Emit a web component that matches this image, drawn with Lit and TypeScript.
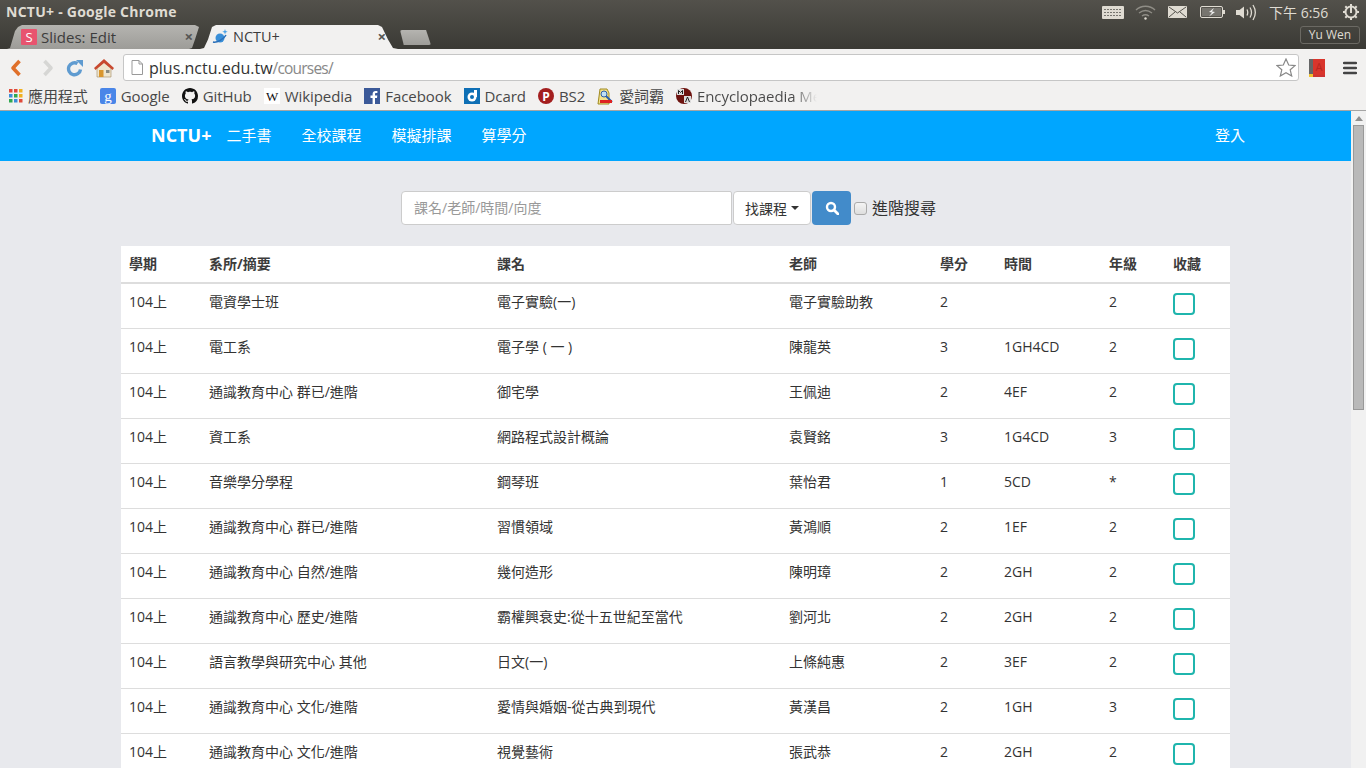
import { LitElement, html, css, svg } from "lit";
import { customElement } from "lit/decorators.js";

const rows = [
  ["104上", "電資學士班", "電子實驗(一)", "電子實驗助教", "2", "", "2"],
  ["104上", "電工系", "電子學 ( 一 )", "陳龍英", "3", "1GH4CD", "2"],
  ["104上", "通識教育中心 群已/進階", "御宅學", "王佩迪", "2", "4EF", "2"],
  ["104上", "資工系", "網路程式設計概論", "袁賢銘", "3", "1G4CD", "3"],
  ["104上", "音樂學分學程", "鋼琴班", "葉怡君", "1", "5CD", "*"],
  ["104上", "通識教育中心 群已/進階", "習慣領域", "黃鴻順", "2", "1EF", "2"],
  ["104上", "通識教育中心 自然/進階", "幾何造形", "陳明璋", "2", "2GH", "2"],
  ["104上", "通識教育中心 歷史/進階", "霸權興衰史:從十五世紀至當代", "劉河北", "2", "2GH", "2"],
  ["104上", "語言教學與研究中心 其他", "日文(一)", "上條純惠", "2", "3EF", "2"],
  ["104上", "通識教育中心 文化/進階", "愛情與婚姻-從古典到現代", "黃漢昌", "2", "1GH", "3"],
  ["104上", "通識教育中心 文化/進階", "視覺藝術", "張武恭", "2", "2GH", "2"],
];
const heads = ["學期", "系所/摘要", "課名", "老師", "學分", "時間", "年級", "收藏"];
const grid = [
  ["#e04a3a", "#e04a3a", "#f0b020"],
  ["#3c8dd8", "#2fa84f", "#f0b020"],
  ["#2fa84f", "#3c8dd8", "#e04a3a"],
];

@customElement("app-root")
export class AppRoot extends LitElement {
  static styles = css`
    :host { display: block; width: 1366px; height: 768px; overflow: hidden; font-family: "Open Sans", "Noto Sans CJK TC", sans-serif; color: #333; }
    .top { background: linear-gradient(#53514b, #3b3a35 48px); height: 49px; display: flex; flex-direction: column; }
    .titlebar { height: 24px; display: flex; align-items: center; padding-left: 6px; color: #dfdbd2; font-size: 14px; font-weight: 700; }
    .title { flex: 1; letter-spacing: .25px; margin-bottom: 2px; }
    .tray { display: flex; align-items: center; height: 24px; color: #dfdbd2; font-size: 14px; font-weight: 400; padding-right: 7px; }
    .tray svg { display: block; flex: none; }
    .t-wifi { margin-left: 11px; }
    .t-mail { margin-left: 12px; }
    .t-bat { margin-left: 13px; }
    .t-vol { margin-left: 11px; }
    .clock { margin: 0 14px 0 13px; width: 60px; white-space: nowrap; }
    .tabs { height: 25px; display: flex; align-items: flex-end; padding-left: 7px; }
    .tab { height: 24px; display: flex; align-items: center; color: #3c3c3c; flex: none; box-sizing: border-box; padding-bottom: 1px; }
    .tab1 { width: 196px; padding-left: 14px; padding-right: 10px; font-size: 15px; background: linear-gradient(#b5b4b0, #9d9c98); clip-path: polygon(0 100%, 3px 96%, 8px 25%, 11px 8%, 15px 0, calc(100% - 8px) 0, calc(100% - 4px) 8%, calc(100% - 8px) 60%, calc(100% - 11px) 96%, calc(100% - 14px) 100%); }
    .tab2 { width: 198px; margin-left: -3px; padding-left: 12px; padding-right: 12px; font-size: 14.5px; background: #f2f1f0; clip-path: polygon(0 100%, 4px 96%, 8px 60%, 12px 8%, 16px 0, calc(100% - 20px) 0, calc(100% - 16px) 8%, calc(100% - 10px) 60%, calc(100% - 5px) 96%, 100% 100%); }
    .tab svg { flex: none; margin-right: 4px; }
    .tab span { flex: 1; }
    .x { color: #555; font-size: 15px; font-weight: 700; line-height: 1; flex: none; }
    .newtab { width: 31px; height: 15px; margin: 0 0 4px 2px; background: linear-gradient(#b5b4b0, #9d9c98); clip-path: polygon(0 0, 84% 0, 100% 100%, 12% 100%); flex: none; border-radius: 2px; }
    .user { margin-left: auto; align-self: flex-start; margin-top: 2px; margin-right: 6px; height: 18px; width: 60px; box-sizing: border-box; border: 1px solid #6b6963; border-radius: 3px; color: #dfdbd2; font-size: 12px; text-align: center; line-height: 16px; }
    .toolbar { height: 35px; background: #f2f1f0; display: flex; align-items: center; box-sizing: border-box; padding: 2px 6px 0 8px; }
    .toolbar svg { display: block; flex: none; }
    .nav { display: flex; align-items: center; width: 115px; flex: none; }
    .n-back { margin-left: 2px; }
    .n-fwd { margin-left: 20px; }
    .n-rel { margin-left: 12px; }
    .n-home { margin-left: 10px; }
    .omni { width: 1176px; flex: none; height: 27px; box-sizing: border-box; background: #fff; border: 1px solid #c6c6c6; border-radius: 3px; display: flex; align-items: center; padding: 0 2px 0 7px; font-size: 16px; }
    .host { color: #333; margin-left: 6px; }
    .path { color: #888; flex: 1; font-size: 15.5px; letter-spacing: -.8px; }
    .ext { display: flex; gap: 18px; margin-left: 10px; align-items: center; }
    .bookmarks { height: 26px; background: #f2f1f0; border-bottom: 1px solid #a5a5a5; box-sizing: content-box; display: flex; align-items: center; padding: 0 0 0 8px; font-size: 15px; line-height: 22px; letter-spacing: -.07px; color: #484848; overflow: hidden; white-space: nowrap; }
    .bm { display: flex; align-items: center; gap: 5px; margin: 0 12px 2px 0; flex: none; }
    .bm svg { flex: none; display: block; }
    .fade { display: block; width: 120px; overflow: hidden; background: linear-gradient(90deg, #484848 80%, #f2f1f0 100%); -webkit-background-clip: text; background-clip: text; color: transparent; }
    .view { display: flex; height: 657px; }
    .page { flex: 1; min-width: 0; background: #e8e9ed; overflow: hidden; }
    .scroll { width: 15px; flex: none; background: #f1f1f1; display: flex; flex-direction: column; box-sizing: border-box; padding: 0 2px; }
    .arrow { height: 14px; display: flex; align-items: center; justify-content: center; }
    .arrow i { border: 4px solid transparent; border-bottom: 5px solid #8f8f8f; border-top: 0; }
    .thumb { height: 285px; box-sizing: border-box; background: #b9b9b9; border: 1px solid #999; }
    .navbar { height: 50px; box-sizing: border-box; padding: 0 0 3px 151px; background: #00a6ff; color: #fff; display: flex; align-items: center; font-size: 15px; }
    .brand { font-size: 18px; font-weight: 700; margin-right: 15px; }
    .link { margin-right: 30px; }
    .login { margin-left: auto; margin-right: 106px; }
    .search { display: flex; align-items: center; margin: 30px 0 0 401px; height: 34px; }
    .input { width: 331px; height: 34px; box-sizing: border-box; border: 1px solid #ccc; border-radius: 4px 2px 2px 4px; background: #fff; color: #999; font-size: 14px; padding-left: 12px; line-height: 32px; }
    .drop { width: 78px; height: 34px; margin-left: 1px; box-sizing: border-box; border: 1px solid #ccc; border-radius: 4px; background: #fff; color: #333; font-size: 14px; padding-bottom: 1px; display: flex; align-items: center; justify-content: center; gap: 4px; }
    .caret { border: 4px solid transparent; border-top-color: #333; border-bottom: 0; }
    .go { width: 39px; height: 34px; margin-left: 1px; background: #428bca; border-radius: 4px; display: flex; align-items: center; justify-content: center; }
    .chk { width: 13px; height: 13px; box-sizing: border-box; border: 1px solid #aaa; border-radius: 3px; background: linear-gradient(#f4f4f4, #dedede); margin: 0 5px 0 3px; }
    .adv { font-size: 16px; color: #333; margin-bottom: 2px; }
    table { border-collapse: collapse; table-layout: fixed; width: 1109px; margin: 21px 0 0 121px; background: #fff; font-size: 14px; line-height: 20px; }
    th { text-align: left; height: 37px; padding: 8px; box-sizing: border-box; border-bottom: 2px solid #ddd; font-weight: 700; vertical-align: middle; color: #3c3c3c; }
    td { padding: 8px; height: 45px; box-sizing: border-box; border-bottom: 1px solid #ddd; vertical-align: top; }
    .fav { display: block; width: 22px; height: 22px; box-sizing: border-box; border: 2px solid #1fb5ad; border-radius: 4px; background: #fff; margin-top: 1px; }
  `;

  render() {
    const widths = [80, 288, 292, 151, 64, 105, 64, 65];
    return html`
      <div class="top">
        <div class="titlebar">
          <div class="title">NCTU+ - Google Chrome</div>
          <div class="tray">
            <svg width="22" height="13" viewBox="0 0 22 13"><rect width="22" height="13" rx="1" fill="#dfdbd2"/><path d="M2 3.500h18M2 6.500h18M2 9.500h18" stroke="#77756f" stroke-dasharray="2 1"/></svg>
            <svg class="t-wifi" width="21" height="15" viewBox="0 0 21 15" fill="none" stroke="#8f8d86" stroke-width="1.400"><path d="M1 5c5-5 14-5 19 0M4 8c4-3 9-3 13 0M7 11c2-1.500 5-1.500 7 0"/><circle cx="10.500" cy="13.500" r="1.200" fill="#dfdbd2" stroke="none"/></svg>
            <svg class="t-mail" width="19" height="12" viewBox="0 0 19 12"><rect width="19" height="12" rx="1" fill="#dfdbd2"/><path d="M1 1l8.500 6L18 1M1 11l6-5M18 11l-6-5" stroke="#55534d" fill="none"/></svg>
            <svg class="t-bat" width="25" height="12" viewBox="0 0 25 12"><rect x=".5" y=".5" width="22" height="11" rx="1.500" fill="#55534d" stroke="#dfdbd2"/><rect x="23" y="4" width="2" height="4" fill="#dfdbd2"/><rect x="2" y="2" width="19" height="8" fill="#77756f"/><path d="M14 2l-5 4 3 .5-3 4 6-4.500-3-.5z" fill="#eee"/></svg>
            <svg class="t-vol" width="20" height="17" viewBox="0 0 20 17" fill="none" stroke="#dfdbd2" stroke-width="1.300"><path d="M0 6h3.500L8 2.500v12L3.500 11H0z" fill="#dfdbd2" stroke="none"/><path d="M11 5.500c1 2 1 4 0 6M14 3.500c1.800 3 1.800 7 0 10M17 1c2.800 4.500 2.800 10.500 0 15"/></svg>
            <span class="clock">下午 6:56</span>
            <svg width="16" height="16" viewBox="0 0 16 16"><circle cx="8" cy="8" r="5.500" fill="none" stroke="#dfdbd2" stroke-width="2"/><path d="M8 0v3M8 13v3M0 8h3M13 8h3M2.300 2.300l2 2M11.700 11.700l2 2M13.700 2.300l-2 2M4.300 11.700l-2 2" stroke="#dfdbd2" stroke-width="2"/><path d="M8 3v6" stroke="#dfdbd2" stroke-width="2"/></svg>
          </div>
        </div>
        <div class="tabs">
          <div class="tab tab1">
            <svg width="16" height="16" viewBox="0 0 16 16"><rect width="16" height="16" rx="1" fill="#e8546f"/><text x="8" y="13" font-size="13" text-anchor="middle" fill="#fff" font-family="Open Sans">S</text></svg>
            <span>Slides: Edit</span><b class="x">×</b>
          </div>
          <div class="tab tab2">
            <svg width="17" height="16" viewBox="0 0 17 16"><circle cx="8" cy="9" r="4.500" fill="#3a8fd8"/><path d="M1 13c4 1 11-3 13-7" fill="none" stroke="#2a6fb8" stroke-width="1.500"/><path d="M13 0l.7 2 2 .7-2 .7-.7 2-.7-2-2-.7 2-.7z" fill="#4aa3e8"/></svg>
            <span>NCTU+</span><b class="x">×</b>
          </div>
          <div class="newtab"></div>
          <div class="user">Yu Wen</div>
        </div>
      </div>
      <div class="toolbar">
        <div class="nav">
          <svg class="n-back" width="12" height="18" viewBox="0 0 12 18"><path d="M9.500 2L3 9l6.500 7" fill="none" stroke="#e0702a" stroke-width="3.600" stroke-linejoin="round"/></svg>
          <svg class="n-fwd" width="12" height="18" viewBox="0 0 12 18"><path d="M2.500 2L9 9l-6.500 7" fill="none" stroke="#d6d6d4" stroke-width="3.600" stroke-linejoin="round"/></svg>
          <svg class="n-rel" width="18" height="18" viewBox="0 0 18 18"><path d="M14.500 10.500A6 6 0 1 1 11.500 4.500" fill="none" stroke="#5f9bd0" stroke-width="3.400"/><path d="M10 1h7v7z" fill="#5f9bd0"/></svg>
          <svg class="n-home" width="20" height="20" viewBox="0 0 20 20"><path d="M3 10l7-6 7 6v9H3z" fill="#efe6cf" stroke="#a08660" stroke-width=".6"/><path d="M10 1L0 10l1.500 2L10 5l8.500 7 1.500-2z" fill="#c8492f"/><rect x="5" y="12" width="4.500" height="7" fill="#d9962e"/><rect x="12" y="12" width="3.500" height="3" fill="#8a8a80"/></svg>
        </div>
        <div class="omni">
          <svg width="12" height="15" viewBox="0 0 12 15"><path d="M1 .5h7l3.500 3.500v10.500H1z" fill="#fff" stroke="#999"/><path d="M8 .5V4h3.500" fill="none" stroke="#999"/></svg>
          <span class="host">plus.nctu.edu.tw</span><span class="path">/courses/</span>
          <svg width="20" height="19" viewBox="0 0 20 19"><path d="M10 1l2.700 6 6.300.6-4.800 4.200 1.500 6.200L10 14.700 4.300 18l1.500-6.200L1 7.600 7.300 7z" fill="#fff" stroke="#888" stroke-width="1.200"/></svg>
        </div>
        <div class="ext">
          <svg width="16" height="18" viewBox="0 0 16 18"><rect width="4" height="18" fill="#666"/><rect x="4" width="12" height="16" fill="#d9352c"/><rect x="4" y="16" width="12" height="2" fill="#c33"/><rect y="15" width="4" height="3" fill="#f0c030"/><text x="10" y="12" font-size="11" text-anchor="middle" fill="#b82620" font-family="Open Sans">A</text></svg>
          <svg width="14" height="14" viewBox="0 0 14 14"><path d="M1 2h12M1 7h12M1 12h12" stroke="#444" stroke-width="2.400" stroke-linecap="round"/></svg>
        </div>
      </div>
      <div class="bookmarks">
        <div class="bm"><svg width="15" height="14" viewBox="0 0 15 14">${[0, 1, 2].flatMap((r) => [0, 1, 2].map((c) => svg`<rect x="${c * 5 + 1}" y="${r * 5}" width="3.500" height="3.500" fill="${grid[r][c]}"/>`))}</svg>應用程式</div>
        <div class="bm"><svg width="16" height="16" viewBox="0 0 16 16"><rect width="16" height="16" rx="2" fill="#4a86e8"/><text x="8" y="13" font-size="15" text-anchor="middle" fill="#fff" font-family="Liberation Serif">g</text></svg>Google</div>
        <div class="bm"><svg width="16" height="16" viewBox="0 0 16 16"><path fill="#111" d="M8 0C3.580 0 0 3.580 0 8c0 3.540 2.290 6.530 5.470 7.590.4.070.55-.17.55-.38 0-.19-.01-.82-.01-1.490-2.010.37-2.530-.49-2.690-.94-.09-.23-.48-.94-.82-1.130-.28-.15-.68-.52-.01-.53.63-.01 1.080.58 1.230.82.720 1.210 1.870.87 2.330.66.070-.52.280-.87.510-1.070-1.780-.2-3.640-.89-3.640-3.950 0-.87.310-1.590.820-2.150-.08-.2-.36-1.020.08-2.120 0 0 .67-.21 2.200.82.640-.18 1.320-.27 2-.27s1.360.09 2 .27c1.530-1.040 2.200-.82 2.200-.82.440 1.100.16 1.920.08 2.120.51.560.82 1.270.82 2.150 0 3.070-1.870 3.750-3.650 3.950.29.250.54.730.54 1.480 0 1.070-.01 1.930-.01 2.200 0 .210.150.460.550.380A8.010 8.010 0 0 0 16 8c0-4.420-3.580-8-8-8z"/></svg>GitHub</div>
        <div class="bm"><svg width="16" height="16" viewBox="0 0 16 16"><rect width="16" height="16" fill="#fff"/><text x="8" y="13" font-size="13" text-anchor="middle" fill="#111" font-family="Liberation Serif">W</text></svg>Wikipedia</div>
        <div class="bm"><svg width="16" height="16" viewBox="0 0 16 16"><rect width="16" height="16" fill="#3b5998"/><path d="M11 16v-6h2l.3-2.400H11V6.200c0-.7.2-1.100 1.200-1.100h1.200V3c-.6-.1-1.200-.1-1.800-.1-1.800 0-3 1.100-3 3.100v1.600H6.500V10h2.100v6z" fill="#fff"/></svg>Facebook</div>
        <div class="bm"><svg width="16" height="16" viewBox="0 0 16 16"><rect width="16" height="16" fill="#0e6fb5"/><circle cx="8" cy="9" r="4.500" fill="#fff"/><circle cx="8" cy="9" r="2" fill="#0e6fb5"/><path d="M10 2h3v7h-3z" fill="#fff"/></svg>Dcard</div>
        <div class="bm"><svg width="16" height="16" viewBox="0 0 16 16"><circle cx="8" cy="8" r="8" fill="#a31f1f"/><text x="8" y="12.500" font-size="12" font-weight="700" text-anchor="middle" fill="#fff" font-family="Open Sans">P</text></svg>BS2</div>
        <div class="bm"><svg width="17" height="17" viewBox="0 0 17 17"><path d="M3 1l7 0 2 4v11H1z" fill="#f3e18a" stroke="#a08a20"/><circle cx="7" cy="6" r="3" fill="#bfe0f5" stroke="#2b5fa8"/><path d="M9 8l6 6" stroke="#2b5fa8" stroke-width="2"/><path d="M3 12h12v3H3z" fill="#d22"/></svg>愛詞霸</div>
        <div class="bm"><svg width="16" height="16" viewBox="0 0 16 16"><circle cx="8" cy="8" r="8" fill="#6e1410"/><path d="M1 1h7v6H1zM8 8h7v7H8z" fill="#ddd"/><path d="M2.500 6V2.500l2 2 2-2V6M9.500 14l2-5 2 5" stroke="#222" fill="none"/></svg><span class="fade">Encyclopaedia Metallum</span></div>
      </div>
      <div class="view">
        <div class="page">
          <div class="navbar">
            <span class="brand">NCTU+</span>
            <span class="link">二手書</span><span class="link">全校課程</span><span class="link">模擬排課</span><span class="link">算學分</span>
            <span class="login">登入</span>
          </div>
          <div class="search">
            <div class="input">課名/老師/時間/向度</div>
            <div class="drop">找課程<i class="caret"></i></div>
            <div class="go"><svg width="14" height="14" viewBox="0 0 14 14"><circle cx="6" cy="6" r="4" fill="none" stroke="#fff" stroke-width="2.400"/><path d="M9 9l4 4" stroke="#fff" stroke-width="2.800" stroke-linecap="round"/></svg></div>
            <div class="chk"></div>
            <span class="adv">進階搜尋</span>
          </div>
          <table>
            <colgroup>${widths.map((w) => html`<col style="width:${w}px" />`)}</colgroup>
            <thead><tr>${heads.map((h) => html`<th>${h}</th>`)}</tr></thead>
            <tbody>
              ${rows.map((r) => html`<tr>${r.map((c) => html`<td>${c}</td>`)}<td><span class="fav"></span></td></tr>`)}
            </tbody>
          </table>
        </div>
        <div class="scroll"><div class="arrow"><i></i></div><div class="thumb"></div></div>
      </div>
    `;
  }
}
